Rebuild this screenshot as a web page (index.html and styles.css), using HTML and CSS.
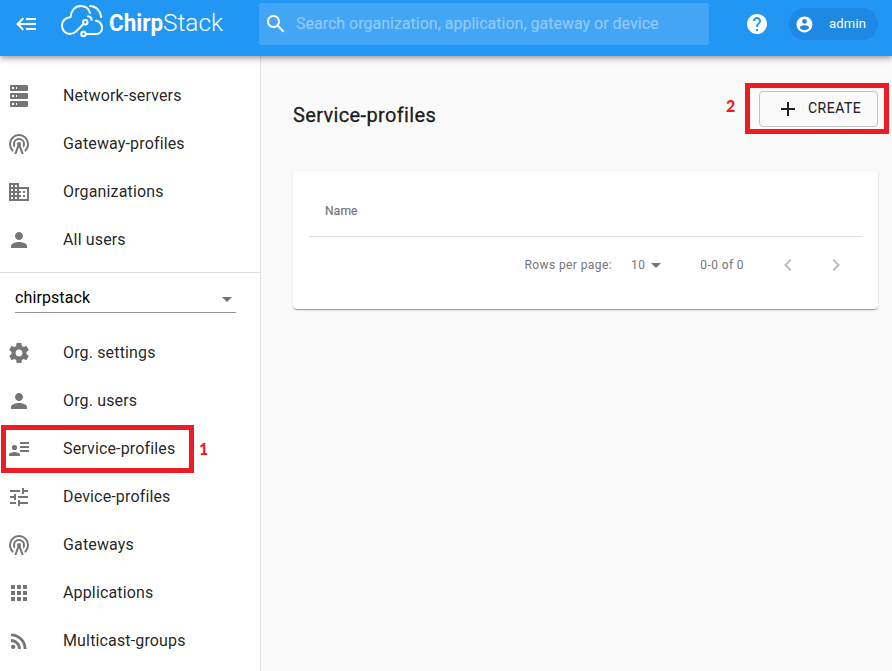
FILE: index.html
```html
<!DOCTYPE html>
<html lang="en">
<head>
<meta charset="utf-8">
<title>ChirpStack</title>
<link rel="stylesheet" href="styles.css">
</head>
<body>
<svg class="defs" width="0" height="0" aria-hidden="true">
  <symbol id="tower" viewBox="0 0 24 24"><path d="M12,10A2,2 0 0,1 14,12C14,12.5 13.82,12.94 13.53,13.29L16.7,22H14.57L12,14.93L9.43,22H7.3L10.47,13.29C10.18,12.94 10,12.5 10,12A2,2 0 0,1 12,10M12,8A4,4 0 0,0 8,12C8,12.5 8.1,13 8.28,13.46L7.4,15.86C6.53,14.81 6,13.47 6,12A6,6 0 0,1 12,6A6,6 0 0,1 18,12C18,13.47 17.47,14.81 16.6,15.86L15.72,13.46C15.9,13 16,12.5 16,12A4,4 0 0,0 12,8M12,4A8,8 0 0,0 4,12C4,14.36 5,16.5 6.64,17.94L5.92,19.94C3.54,18.11 2,15.23 2,12A10,10 0 0,1 12,2A10,10 0 0,1 22,12C22,15.23 20.46,18.11 18.08,19.94L17.36,17.94C19,16.5 20,14.36 20,12A8,8 0 0,0 12,4Z"/></symbol>
  <symbol id="person" viewBox="0 0 24 24"><path d="M12 12c2.21 0 4-1.79 4-4s-1.79-4-4-4-4 1.790-4 4 1.790 4 4 4zm0 2c-2.670 0-8 1.340-8 4v2h16v-2c0-2.660-5.330-4-8-4z"/></symbol>
</svg>
<header class="appbar">
  <svg class="icon menu" viewBox="0 0 24 24"><path d="M5,13L9,17L7.6,18.42L1.18,12L7.6,5.58L9,7L5,11H21V13H5M21,6V8H11V6H21M21,16V18H11V16H21Z"/></svg>
  <svg class="logo" viewBox="0 0 166 40" width="166" height="40">
    <g fill="none" stroke="#fff" stroke-width="2" stroke-linecap="round" stroke-linejoin="round">
      <path d="M24.500 24 17 31.500C15 33.500 13 34 10.500 34A8.300 8.300 0 0 1 3 25.500C3 21 6.500 17.500 11.500 17.300C12 10.500 16 6 21.500 6C26.500 6 30 9 31 13"/>
      <path d="M27 34H37C41 34 43 31 43 28C43 23.800 40.500 21.500 37 20.800"/>
      <path d="M31 6C37 6.300 41.500 10.800 42.300 17M29 16.300C31.300 16.600 32.500 18 32.700 20"/>
      <circle cx="26.300" cy="22.200" r="2.200"/><circle cx="24.500" cy="34" r="2.200"/>
    </g>
    <text class="chirp" x="50" y="31.300" textLength="54" lengthAdjust="spacingAndGlyphs">Chirp</text>
    <text class="stack" x="104" y="31.300" textLength="60" lengthAdjust="spacingAndGlyphs">Stack</text>
  </svg>
  <div class="search">
    <svg class="icon" viewBox="0 0 24 24"><path d="M15.500 14h-.79l-.28-.27C15.410 12.590 16 11.110 16 9.500 16 5.910 13.090 3 9.500 3S3 5.910 3 9.500 5.910 16 9.500 16c1.610 0 3.090-.59 4.230-1.570l.27.28v.79l5 4.990L20.490 19l-4.990-5zm-6 0C7.010 14 5 11.990 5 9.500S7.010 5 9.500 5 14 7.010 14 9.500 11.990 14 9.500 14z"/></svg>
    <span>Search organization, application, gateway or device</span>
  </div>
  <svg class="icon help" viewBox="0 0 24 24"><path d="M12 2C6.480 2 2 6.480 2 12s4.480 10 10 10 10-4.480 10-10S17.520 2 12 2zm1 17h-2v-2h2v2zm2.070-7.750l-.9.920C13.450 12.900 13 13.500 13 15h-2v-.5c0-1.100.45-2.100 1.170-2.830l1.240-1.260c.37-.36.59-.86.59-1.410 0-1.100-.9-2-2-2s-2 .9-2 2H8c0-2.210 1.790-4 4-4s4 1.790 4 4c0 .88-.36 1.680-.93 2.250z"/></svg>
  <div class="chip">
    <svg viewBox="0 0 24 24" width="19" height="19"><path d="M12 2C6.480 2 2 6.480 2 12s4.480 10 10 10 10-4.480 10-10S17.520 2 12 2zm0 3c1.660 0 3 1.340 3 3s-1.340 3-3 3-3-1.340-3-3 1.340-3 3-3zm0 14.200c-2.500 0-4.710-1.280-6-3.220.03-1.990 4-3.080 6-3.080 1.990 0 5.970 1.090 6 3.080-1.290 1.940-3.500 3.220-6 3.220z"/></svg>
    <span>admin</span>
  </div>
</header>
<div class="body">
  <nav class="drawer">
    <ul class="global">
      <li><svg class="icon" viewBox="0 0 24 24"><path d="M4,1H20A1,1 0 0,1 21,2V6A1,1 0 0,1 20,7H4A1,1 0 0,1 3,6V2A1,1 0 0,1 4,1M4,9H20A1,1 0 0,1 21,10V14A1,1 0 0,1 20,15H4A1,1 0 0,1 3,14V10A1,1 0 0,1 4,9M4,17H20A1,1 0 0,1 21,18V22A1,1 0 0,1 20,23H4A1,1 0 0,1 3,22V18A1,1 0 0,1 4,17M9,5H10V3H9V5M9,13H10V11H9V13M9,21H10V19H9V21M5,3V5H7V3H5M5,11V13H7V11H5M5,19V21H7V19H5Z"/></svg><span>Network-servers</span></li>
      <li><svg class="icon"><use href="#tower"/></svg><span>Gateway-profiles</span></li>
      <li><svg class="icon" viewBox="0 0 24 24"><path d="M12 7V3H2v18h20V7H12zM6 19H4v-2h2v2zm0-4H4v-2h2v2zm0-4H4V9h2v2zm0-4H4V5h2v2zm4 12H8v-2h2v2zm0-4H8v-2h2v2zm0-4H8V9h2v2zm0-4H8V5h2v2zm10 12h-8v-2h2v-2h-2v-2h2v-2h-2V9h8v10zm-2-8h-2v2h2v-2zm0 4h-2v2h2v-2z"/></svg><span>Organizations</span></li>
      <li><svg class="icon"><use href="#person"/></svg><span>All users</span></li>
    </ul>
    <div class="org"><span>chirpstack</span><svg viewBox="0 0 10 5" width="10" height="5"><path d="M0 0H10L5 5z"/></svg></div>
    <ul class="local">
      <li><svg class="icon" viewBox="0 0 24 24"><path d="M19.430 12.980c.04-.32.07-.64.07-.98s-.03-.66-.07-.98l2.110-1.650c.19-.15.24-.42.12-.64l-2-3.460c-.12-.22-.39-.3-.61-.22l-2.490 1c-.52-.4-1.080-.73-1.690-.98l-.38-2.650C14.460 2.180 14.250 2 14 2h-4c-.25 0-.46.18-.49.42l-.38 2.650c-.61.25-1.170.59-1.690.98l-2.490-1c-.23-.09-.49 0-.61.22l-2 3.460c-.13.22-.07.49.12.64l2.110 1.650c-.04.32-.07.65-.07.98s.03.66.07.98l-2.110 1.650c-.19.15-.24.42-.12.64l2 3.460c.12.22.39.3.61.22l2.490-1c.52.4 1.080.73 1.690.98l.38 2.650c.03.24.24.42.49.42h4c.25 0 .46-.18.49-.42l.38-2.650c.61-.25 1.170-.59 1.690-.98l2.490 1c.23.09.49 0 .61-.22l2-3.460c.12-.22.07-.49-.12-.64l-2.110-1.650zM12 15.500c-1.930 0-3.500-1.570-3.500-3.500s1.570-3.500 3.500-3.500 3.500 1.570 3.500 3.500-1.570 3.500-3.500 3.500z"/></svg><span>Org. settings</span></li>
      <li><svg class="icon"><use href="#person"/></svg><span>Org. users</span></li>
      <li><svg class="icon" viewBox="0 0 24 24"><path d="M13 5h9v2h-9zM13 9h9v2h-9zM13 13h9v2h-9zM7.500 8a2.600 2.600 0 1 1 0 5.200 2.600 2.600 0 0 1 0-5.200zM2 19v-1.300c0-1.800 3.600-2.700 5.500-2.700s5.500.9 5.500 2.700v1.300z"/></svg><span>Service-profiles</span></li>
      <li><svg class="icon" viewBox="0 0 24 24"><path d="M3 17v2h6v-2H3zM3 5v2h10V5H3zm10 16v-2h8v-2h-8v-2h-2v6h2zM7 9v2H3v2h4v2h2V9H7zm14 4v-2H11v2h10zm-6-4h2V7h4V5h-4V3h-2v6z"/></svg><span>Device-profiles</span></li>
      <li><svg class="icon"><use href="#tower"/></svg><span>Gateways</span></li>
      <li><svg class="icon" viewBox="0 0 24 24"><path d="M4 8h4V4H4v4zm6 12h4v-4h-4v4zm-6 0h4v-4H4v4zm0-6h4v-4H4v4zm6 0h4v-4h-4v4zm6-10v4h4V4h-4zm-6 4h4V4h-4v4zm6 6h4v-4h-4v4zm0 6h4v-4h-4v4z"/></svg><span>Applications</span></li>
      <li><svg class="icon" viewBox="0 0 24 24"><circle cx="6.180" cy="17.820" r="2.180"/><path d="M4 4.440v2.830c7.030 0 12.730 5.700 12.730 12.730h2.830c0-8.590-6.970-15.560-15.560-15.560zm0 5.660v2.830c3.900 0 7.070 3.170 7.070 7.070h2.830c0-5.470-4.430-9.900-9.900-9.900z"/></svg><span>Multicast-groups</span></li>
    </ul>
  </nav>
  <main>
    <div class="title">
      <h1>Service-profiles</h1>
      <button class="create"><svg class="icon" viewBox="0 0 24 24"><path d="M19 13h-6v6h-2v-6H5v-2h6V5h2v6h6v2z"/></svg><span>CREATE</span></button>
    </div>
    <section class="card">
      <div class="thead">Name</div>
      <div class="pager">
        <span class="rows">Rows per page:</span><span class="count">10</span>
        <svg class="caret" viewBox="0 0 10 5" width="10" height="5"><path d="M0 0H10L5 5z"/></svg>
        <span class="range">0-0 of 0</span>
        <svg class="icon prev" viewBox="0 0 24 24"><path d="M15.410 7.410L14 6l-6 6 6 6 1.410-1.410L10.830 12z"/></svg>
        <svg class="icon next" viewBox="0 0 24 24"><path d="M10 6L8.590 7.410 13.170 12l-4.580 4.590L10 18l6-6z"/></svg>
      </div>
    </section>
  </main>
</div>
<div class="mark mark-nav"></div><b class="num num-nav">1</b>
<div class="mark mark-create"></div><b class="num num-create">2</b>
</body>
</html>
```

FILE: styles.css
```css
* { box-sizing: border-box; }
body { margin: 0; height: 671px; overflow: hidden; position: relative; background: #fafafa; color: rgba(0,0,0,.87); font-family: Roboto, "Liberation Sans", sans-serif; }
.defs { position: absolute; }
.icon { width: 24px; height: 24px; flex: none; fill: currentColor; }
.appbar { position: relative; z-index: 2; display: flex; align-items: center; height: 56px; padding-bottom: 8px; background: #2196f3; color: #fff; box-shadow: 0 2px 4px -1px rgba(0,0,0,.2), 0 4px 5px rgba(0,0,0,.14), 0 1px 10px rgba(0,0,0,.12); }
.menu { margin-left: 15px; }
.logo { margin-left: 20px; align-self: flex-start; flex: none; }
.logo text { fill: #fff; font-size: 23.5px; }
.chirp { font-weight: 700; }
.stack { font-weight: 300; }
.search { display: flex; align-items: center; width: 450px; height: 42px; margin-left: 34px; padding-left: 5px; border-radius: 3px; background: #42a5f5; font-size: 16px; }
.search span { margin-left: 8px; padding-bottom: 2px; color: #90caf9; -webkit-text-stroke: .2px; }
.help { margin-left: 36px; }
.chip { display: flex; align-items: center; width: 89px; height: 32px; margin-left: 20px; padding-left: 6px; border-radius: 16px; background: #1e88e5; font-size: 13px; }
.chip svg { fill: #fff; }
.chip span { margin-left: 15px; padding-bottom: 2px; letter-spacing: .2px; }
.body { display: flex; height: 615px; }
.drawer { width: 261px; flex: none; background: #fff; border-right: 1px solid #e0e0e0; }
ul { list-style: none; margin: 0; padding: 0; }
li { display: flex; align-items: center; height: 48px; padding-left: 7px; font-size: 16px; letter-spacing: .15px; }
li .icon { color: #757575; margin-top: 1px; }
li span { margin-left: 32px; }
.global { height: 217px; padding-top: 15px; border-bottom: 1px solid #e0e0e0; }
.org { display: flex; align-items: center; justify-content: space-between; width: 221px; height: 32px; margin: 8px 0 0 15px; padding: 2px 4px 0 0; border-bottom: 1px solid #949494; font-size: 16px; letter-spacing: .1px; color: #000; }
.org svg { fill: #757575; margin-top: 3px; }
.local { padding-top: 15px; }
main { flex: 1; padding: 35px 14px 0 32px; }
.title { display: flex; justify-content: space-between; height: 80px; }
h1 { margin: 12px 0 0; font-size: 20px; line-height: 24px; font-weight: 400; letter-spacing: .36px; -webkit-text-stroke: .35px; }
.create { display: flex; align-items: center; width: 119px; height: 36px; padding: 0 0 0 16px; border: 1px solid #c4c4c4; border-radius: 4px; background: transparent; color: rgba(0,0,0,.87); font: 400 14px Roboto, sans-serif; letter-spacing: .5px; -webkit-text-stroke: .15px; }
.create span { margin-left: 8px; padding-bottom: 2px; }
.card { height: 138px; padding: 16px; border-radius: 4px; background: #fff; box-shadow: 0 2px 1px -1px rgba(0,0,0,.2), 0 1px 1px rgba(0,0,0,.14), 0 1px 3px rgba(0,0,0,.12); }
.thead { height: 50px; padding: 16px 16px 0; border-bottom: 1px solid #e0e0e0; font-size: 12px; line-height: 16px; font-weight: 400; letter-spacing: .15px; -webkit-text-stroke: .2px; color: #757575; }
.pager { display: flex; align-items: center; justify-content: flex-end; height: 56px; padding-right: 14px; color: #757575; font-size: 12px; letter-spacing: .4px; }
.count { margin-left: 19px; }
.caret { margin: 1px 39px 0 6px; fill: #757575; }
.pager .icon { color: #bdbdbd; }
.prev { margin-left: 32px; }
.next { margin-left: 24px; }
.mark { position: absolute; z-index: 3; border: 5px solid #ed1c24; }
.mark-nav { left: 1px; top: 425px; width: 193px; height: 48px; }
.mark-create { left: 745px; top: 83px; width: 144px; height: 51px; }
.num { position: absolute; z-index: 3; color: #ed1c24; font: 900 16px/20px Lato, sans-serif; }
.num-nav { left: 199px; top: 439px; }
.num-create { left: 726px; top: 96px; }
```
